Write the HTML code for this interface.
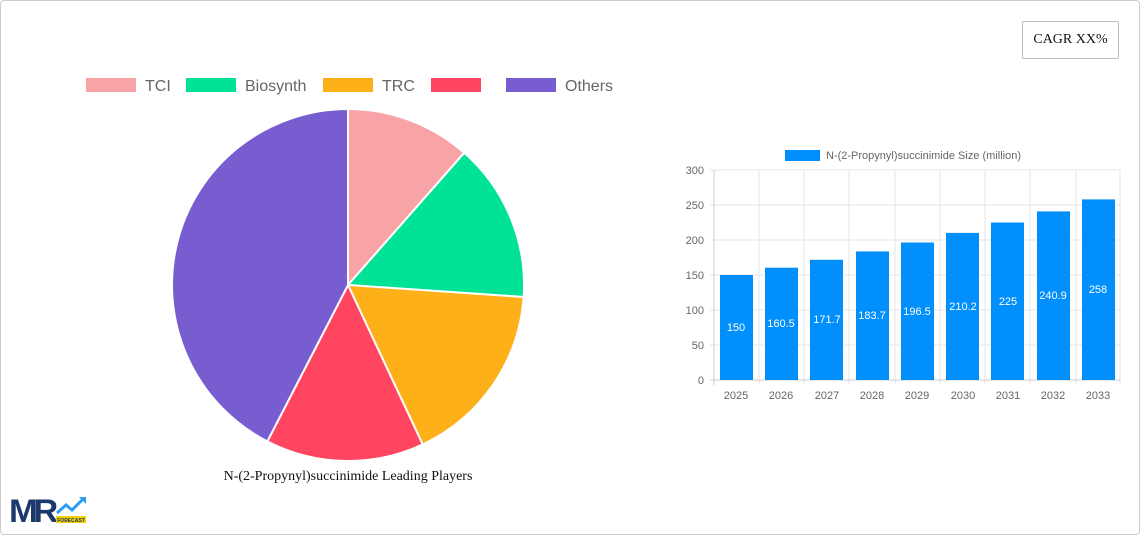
<!DOCTYPE html>
<html><head><style>
body{margin:0;width:1140px;height:535px;background:#fff;font-family:"Liberation Sans",sans-serif;position:relative;overflow:hidden}
.frame{position:absolute;left:0;top:0;width:1138px;height:533px;border:1px solid #ccc;border-radius:4px}
.cagr{position:absolute;left:1022px;top:21px;width:95px;height:36px;border:1px solid #bbb;border-radius:2px;font-family:"Liberation Serif",serif;font-size:14px;line-height:36px;text-align:center;color:#111}
</style></head><body>
<div class="frame"></div>
<div class="cagr">CAGR XX%</div>
<svg width="1140" height="535" style="position:absolute;left:0;top:0">
<g font-size="16" fill="#666">
<rect x="86" y="78" width="50" height="14" fill="#f8a3a6"/><text x="145" y="91">TCI</text>
<rect x="186" y="78" width="50" height="14" fill="#00e396"/><text x="245" y="91">Biosynth</text>
<rect x="323" y="78" width="50" height="14" fill="#feb019"/><text x="382" y="91">TRC</text>
<rect x="431" y="78" width="50" height="14" fill="#ff4560"/>
<rect x="506" y="78" width="50" height="14" fill="#775dd0"/><text x="565" y="91">Others</text>
</g>
<g stroke="#fff" stroke-width="2">
<path d="M348 285 L348 109 A176 176 0 0 1 464.2 152.8Z" fill="#f8a3a6"/>
<path d="M348 285 L464.2 152.8 A176 176 0 0 1 523.6 297Z" fill="#00e396"/>
<path d="M348 285 L523.6 297 A176 176 0 0 1 422.7 444.4Z" fill="#feb019"/>
<path d="M348 285 L422.7 444.4 A176 176 0 0 1 267.3 441.4Z" fill="#ff4560"/>
<path d="M348 285 L267.3 441.4 A176 176 0 0 1 348 109Z" fill="#775dd0"/>
</g>
<text x="348" y="480" text-anchor="middle" font-family="Liberation Serif,serif" font-size="14" fill="#111">N-(2-Propynyl)succinimide Leading Players</text>
<rect x="785" y="150" width="35" height="11" fill="#008ffb"/>
<text x="826" y="159" font-size="11" fill="#666">N-(2-Propynyl)succinimide Size (million)</text>
<g stroke="#e6e6e6" stroke-width="1">
<line x1="710" y1="170" x2="1120" y2="170"/><line x1="710" y1="205" x2="1120" y2="205"/><line x1="710" y1="240" x2="1120" y2="240"/><line x1="710" y1="275" x2="1120" y2="275"/><line x1="710" y1="310" x2="1120" y2="310"/><line x1="710" y1="345" x2="1120" y2="345"/>
<line x1="759" y1="170" x2="759" y2="385"/><line x1="804" y1="170" x2="804" y2="385"/><line x1="849" y1="170" x2="849" y2="385"/><line x1="895" y1="170" x2="895" y2="385"/><line x1="940" y1="170" x2="940" y2="385"/><line x1="985" y1="170" x2="985" y2="385"/><line x1="1030" y1="170" x2="1030" y2="385"/><line x1="1076" y1="170" x2="1076" y2="385"/><line x1="1120" y1="170" x2="1120" y2="385"/>
</g>
<line x1="714" y1="170" x2="714" y2="385" stroke="#ccc"/>
<line x1="710" y1="380" x2="1120" y2="380" stroke="#ccc"/>
<g font-size="11" fill="#666" text-anchor="end">
<text x="704" y="174">300</text><text x="704" y="209">250</text><text x="704" y="244">200</text><text x="704" y="279">150</text><text x="704" y="314">100</text><text x="704" y="349">50</text><text x="704" y="384">0</text>
</g>
<g fill="#008ffb">
<rect x="720" y="275" width="33" height="105"/>
<rect x="765" y="267.7" width="33" height="112.3"/>
<rect x="810" y="259.8" width="33" height="120.2"/>
<rect x="856" y="251.4" width="33" height="128.6"/>
<rect x="901" y="242.5" width="33" height="137.5"/>
<rect x="946" y="232.9" width="33" height="147.1"/>
<rect x="991" y="222.5" width="33" height="157.5"/>
<rect x="1037" y="211.4" width="33" height="168.6"/>
<rect x="1082" y="199.4" width="33" height="180.6"/>
</g>
<g font-size="11" fill="#fff" text-anchor="middle">
<text x="736" y="331">150</text><text x="781" y="327">160.5</text><text x="827" y="323">171.7</text><text x="872" y="319">183.7</text><text x="917" y="315">196.5</text><text x="963" y="310">210.2</text><text x="1008" y="305">225</text><text x="1053" y="299">240.9</text><text x="1098" y="293">258</text>
</g>
<g font-size="11" fill="#666" text-anchor="middle">
<text x="736" y="399">2025</text><text x="781" y="399">2026</text><text x="827" y="399">2027</text><text x="872" y="399">2028</text><text x="917" y="399">2029</text><text x="963" y="399">2030</text><text x="1008" y="399">2031</text><text x="1053" y="399">2032</text><text x="1098" y="399">2033</text>
</g>
<text x="9" y="522" font-size="32" font-weight="bold" fill="#1b3a6b" letter-spacing="-4" textLength="45" lengthAdjust="spacingAndGlyphs">MR</text>
<path d="M57 513 L66 505 L72 510 L83 499" stroke="#2a9df4" stroke-width="3" fill="none"/>
<path d="M79 497 L86 497 L86 504Z" fill="#2a9df4"/>
<rect x="56" y="516" width="30" height="7" fill="#f5d000"/>
<text x="71" y="522" font-size="5" font-weight="bold" fill="#1b3a6b" text-anchor="middle">FORECAST</text>
</svg>
</body></html>
